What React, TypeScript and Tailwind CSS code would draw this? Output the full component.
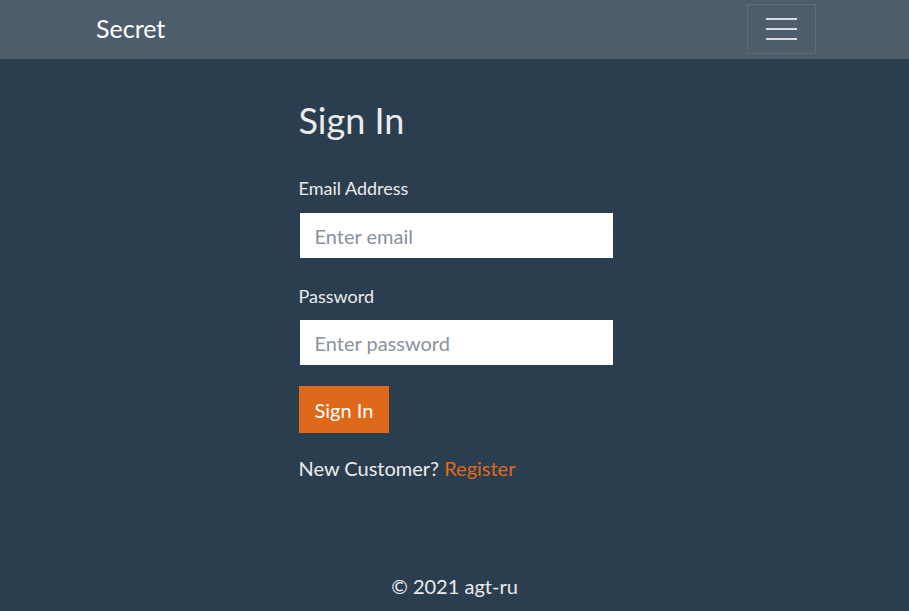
export default function App() {
  return (
    <div
      className="min-h-screen flex flex-col bg-[#2b3e50] text-[#ebebeb]"
      style={{ fontFamily: "Lato, 'Open Sans', sans-serif" }}
    >
      <header className="h-[59px] bg-[#4e5d6c] flex items-center justify-between pl-[96px] pr-[93px]">
        <a href="#" className="text-[25px] leading-none text-white -mt-[2px]">
          Secret
        </a>
        <button className="w-[69px] h-[50px] -mt-[1px] border border-[#5d6a78] flex flex-col items-center justify-center gap-[8px]">
          <span className="block w-[31px] h-[2px] bg-[#d7dbe0]" />
          <span className="block w-[31px] h-[2px] bg-[#d7dbe0]" />
          <span className="block w-[31px] h-[2px] bg-[#d7dbe0]" />
        </button>
      </header>

      <main className="flex-1 flex justify-center pt-[40px]">
        <div className="w-[314px] ml-[2px]">
          <h1 className="text-[36px] leading-[1.2] mb-[34px]">Sign In</h1>

          <label className="block text-[18px] leading-[24px] mb-[13px]">
            Email Address
          </label>
          <input
            type="email"
            placeholder="Enter email"
            className="block w-full h-[45px] bg-white pl-[15px] text-[20px] text-[#2b3e50] placeholder:text-[#8a929b] border-l border-[#2b3e50] outline-none mb-[26px]"
          />

          <label className="block text-[18px] leading-[24px] mb-[12px]">
            Password
          </label>
          <input
            type="password"
            placeholder="Enter password"
            className="block w-full h-[45px] bg-white pl-[15px] text-[20px] text-[#2b3e50] placeholder:text-[#8a929b] border-l border-[#2b3e50] outline-none mb-[21px]"
          />

          <button className="h-[47px] px-[16px] bg-[#df691a] text-white text-[20px]">
            Sign In
          </button>

          <p className="mt-[22px] text-[20px] leading-[27px]">
            New Customer?{" "}
            <a href="#" className="text-[#df691a]">
              Register
            </a>
          </p>
        </div>
      </main>

      <footer className="text-center text-[20px] leading-[27px] pb-[11px]">
        © 2021 agt-ru
      </footer>
    </div>
  );
}
